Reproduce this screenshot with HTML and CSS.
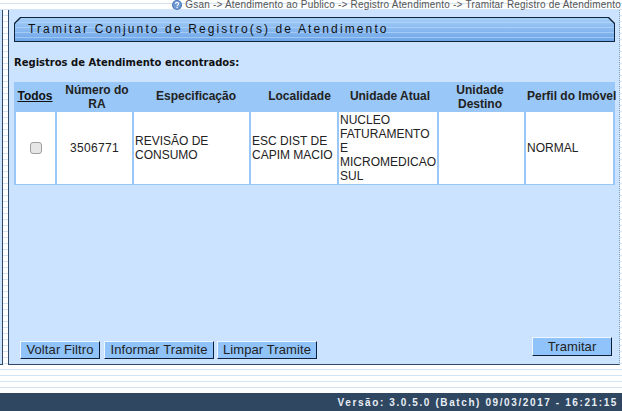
FILE: index.html
```html
<!DOCTYPE html>
<html lang="pt">
<head>
<meta charset="utf-8">
<title>Tramitar Conjunto de Registro(s) de Atendimento</title>
<link rel="stylesheet" href="styles.css">
</head>
<body>
<div class="breadcrumb">
  <svg class="help" width="10" height="10" viewBox="0 0 10 10"><circle cx="5" cy="5" r="5" fill="#4a78b8"/><circle cx="5" cy="5" r="3.9" fill="#6f9ad2"/><path d="M3.4 3.8 C3.5 1.9 6.7 1.9 6.7 3.7 C6.7 4.9 5.1 4.8 5.1 6.2" fill="none" stroke="#fff" stroke-width="1.1"/><rect x="4.5" y="7" width="1.2" height="1.2" fill="#fff"/></svg>
  <span>Gsan -&gt; Atendimento ao Publico -&gt; Registro Atendimento -&gt; Tramitar Registro de Atendimento</span>
</div>
<div class="workspace">
  <div class="sidebar"></div>
  <main class="panel">
    <div class="title-bar"><div class="title-fill"><h1>Tramitar Conjunto de Registro(s) de Atendimento</h1></div></div>
    <p class="found">Registros de Atendimento encontrados:</p>
    <div class="head">
      <div class="up"><a href="#">Todos</a></div>
      <div>Número do<br>RA</div>
      <div class="up">Especificação</div>
      <div class="up">Localidade</div>
      <div class="up">Unidade Atual</div>
      <div>Unidade<br>Destino</div>
      <div class="nowrap up">Perfil do Imóvel</div>
    </div>
    <table class="grid">
      <colgroup>
        <col class="c1"><col class="c2"><col class="c3"><col class="c4"><col class="c5"><col class="c6"><col class="c7">
      </colgroup>
      <tbody>
        <tr>
          <td class="center"><span class="check"></span></td>
          <td class="center num">3506771</td>
          <td>REVISÃO DE CONSUMO</td>
          <td>ESC DIST DE CAPIM MACIO</td>
          <td>NUCLEO FATURAMENTO E MICROMEDICAO SUL</td>
          <td></td>
          <td>NORMAL</td>
        </tr>
      </tbody>
    </table>
    <div class="actions">
      <div class="actions-left">
        <button class="btn btn-filter">Voltar Filtro</button>
        <button class="btn btn-inform">Informar Tramite</button>
        <button class="btn btn-clear">Limpar Tramite</button>
      </div>
      <button class="btn btn-send">Tramitar</button>
    </div>
  </main>
</div>
<div class="stripes"></div>
<footer class="footer">Versão: 3.0.5.0 (Batch) 09/03/2017 - 16:21:15</footer>
</body>
</html>
```
FILE: styles.css
```css
* { box-sizing: border-box; }
html, body { margin: 0; height: 411px; overflow: hidden; }
body {
  width: 622px;
  font-family: "Liberation Sans", Arial, sans-serif;
  color: #222;
  background: repeating-linear-gradient(to bottom, #fff 0, #fff 3px, #d3e5f4 3px, #d3e5f4 4px, #fff 4px, #fff 6px);
  display: flex;
  flex-direction: column;
}
.breadcrumb {
  height: 10px;
  display: flex;
  justify-content: flex-end;
  align-items: center;
  gap: 3px;
  padding-right: 1px;
  font-size: 10px;
  line-height: 10px;
  letter-spacing: 0.2px;
  color: #555;
}
.help { flex: none; }
.workspace { height: 355px; display: flex; gap: 5px; }
.sidebar {
  width: 3px;
  background: #cbe3ff;
  border-right: 1px solid #2f4a66;
  border-bottom: 1px solid #2f4a66;
}
.panel {
  width: 612px;
  background: #cbe3ff;
  border-left: 1px solid #2f4a66;
  border-bottom: 1px solid #2f4a66;
  border-right: 1px dotted #7fa0c0;
  padding: 7px 4px 5px 5px;
  display: flex;
  flex-direction: column;
}
.title-bar {
  height: 25px;
  width: 601px;
  padding: 1px;
  background: #10243c;
  clip-path: polygon(6px 0, calc(100% - 6px) 0, 100% 6px, 100% 100%, 0 100%, 0 6px);
}
.title-fill {
  height: 100%;
  clip-path: polygon(6px 0, calc(100% - 6px) 0, 100% 6px, 100% 100%, 0 100%, 0 6px);
  background:
    repeating-linear-gradient(to bottom, transparent 0, transparent 4px, rgba(190, 222, 255, 0.55) 4px, rgba(190, 222, 255, 0.55) 5px),
    linear-gradient(to bottom, #a5cdf7, #6ea6e8);
  display: flex;
  align-items: center;
  padding: 0 0 2px 13px;
}
.title-bar h1 {
  margin: 0;
  font-size: 12px;
  font-weight: normal;
  letter-spacing: 2.12px;
  color: #111;
}
.found {
  margin: 15px 0 0;
  height: 25px;
  font: bold 10px/12px "DejaVu Sans", Verdana, sans-serif;
  color: #111;
}
.head {
  width: 601px;
  height: 29px;
  padding: 0 1px 0 2px;
  display: grid;
  grid-template-columns: 38px 86px 112px 95px 86px 94px 87px;
  align-items: center;
  text-align: center;
  background: #99c7f7;
  font-size: 12px;
  font-weight: bold;
  line-height: 14px;
  color: #222;
}
.head a { color: #111; }
.head .up { padding-bottom: 2px; }
.nowrap { white-space: nowrap; }
.grid {
  width: 601px;
  table-layout: fixed;
  border-collapse: separate;
  border-spacing: 2px 1px;
  background: #99c7f7;
  font-size: 12px;
}
.c1 { width: 39px; }
.c2 { width: 75px; }
.c3 { width: 115px; }
.c4 { width: 86px; }
.c5 { width: 98px; }
.c6 { width: 85px; }
.c7 { width: 87px; }
.grid td {
  height: 72px;
  padding: 0 1px;
  line-height: 14px;
  background: #fff;
  color: #222;
}
.grid td.center { text-align: center; }
.grid td.num { letter-spacing: 0.3px; }
.check {
  display: block;
  width: 12px;
  height: 12px;
  margin: 0 auto;
  border: 1px solid #a0a0a0;
  border-radius: 3px;
  background: #e6e6e6;
}
.actions {
  margin-top: auto;
  display: flex;
  justify-content: space-between;
  align-items: flex-start;
  padding-left: 6px;
  padding-right: 3px;
}
.actions-left { display: flex; gap: 3px; padding-top: 4px; }
.btn {
  height: 18px;
  padding: 0;
  font: 13px/14px "Liberation Sans", Arial, sans-serif;
  letter-spacing: 0.1px;
  color: #222;
  background: #8fc3fa;
  border-style: solid;
  border-width: 1px;
  border-color: #eef6ff #0c1f3a #0c1f3a #eef6ff;
}
.btn-filter { width: 80px; margin-right: 1px; }
.btn-inform { width: 110px; }
.btn-clear { width: 100px; }
.btn-send { width: 80px; height: 19px; }
.stripes { height: 28px; }
.footer {
  height: 18px;
  background: #2f4760;
  color: #e8eef5;
  font-size: 10px;
  font-weight: bold;
  line-height: 19px;
  letter-spacing: 1.6px;
  text-align: right;
  padding-right: 4px;
}
```
